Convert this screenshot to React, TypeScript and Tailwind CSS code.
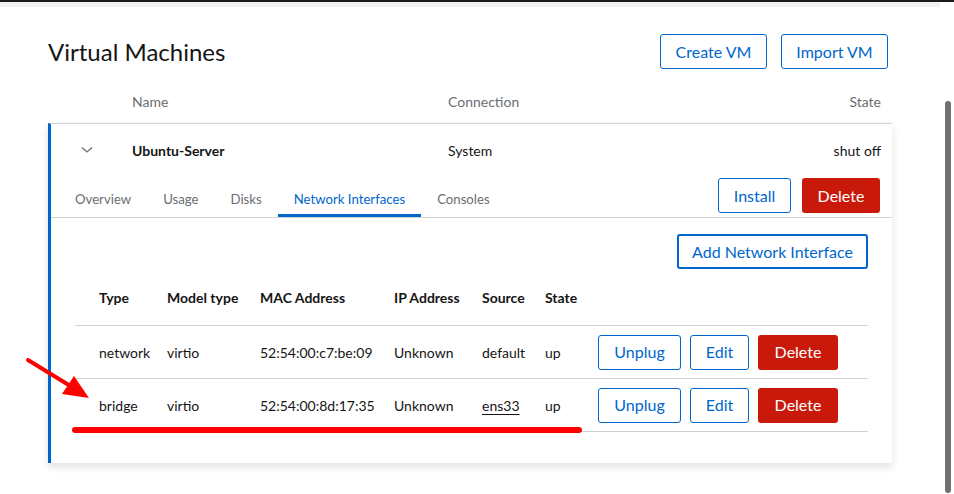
import React from "react";

const Outline = ({ children, className = "" }: { children: React.ReactNode; className?: string }) => (
  <button className={`h-[35px] rounded-[3px] border border-[#0066cc] text-[#0066cc] text-[16px] bg-white ${className}`}>
    {children}
  </button>
);
const Danger = ({ children, className = "" }: { children: React.ReactNode; className?: string }) => (
  <button className={`h-[35px] rounded-[3px] bg-[#c9190b] text-white text-[16px] ${className}`}>{children}</button>
);

const rows = [
  { type: "network", model: "virtio", mac: "52:54:00:c7:be:09", ip: "Unknown", source: "default", state: "up", link: false },
  { type: "bridge", model: "virtio", mac: "52:54:00:8d:17:35", ip: "Unknown", source: "ens33", state: "up", link: true },
];

const cols = "grid grid-cols-[92px_93px_134px_88px_63px_53px_1fr] items-center";

export default function App() {
  return (
    <div className="relative w-[954px] h-[494px] overflow-hidden bg-white font-['Lato',sans-serif] text-[#151515]">
      <div className="h-[2px] bg-[#1b1b1b]" />
      <div className="h-[5px] w-[940px] bg-[#f2f2f2]" />
      <div className="absolute left-[945px] top-[101px] w-[6px] h-[392px] rounded-[3px] bg-[#707070]" />

      <div className="pl-[48px] pr-[62px]">
        <div className="flex items-center justify-between mt-[27px] pr-[4px]">
          <h1 className="text-[24px] leading-[35px] text-[#151515]">Virtual Machines</h1>
          <div className="flex gap-[14px]">
            <Outline className="w-[107px]">Create VM</Outline>
            <Outline className="w-[107px]">Import VM</Outline>
          </div>
        </div>

        <div className="flex items-center h-[20px] mt-[22px] text-[14px] text-[#6a6e73]">
          <div className="w-[84px]" />
          <div className="w-[316px]">Name</div>
          <div className="flex-1">Connection</div>
          <div className="pr-[11px]">State</div>
        </div>

        <div className="mt-[12px] border-t border-[#d2d2d2] border-l-[3px] border-l-[#0066cc] shadow-[0_4px_8px_rgba(0,0,0,0.12)] bg-white">
          <div className="flex items-center h-[52px] text-[14px]">
            <div className="w-[81px] flex justify-start pl-[30px]">
              <svg width="12" height="8" viewBox="0 0 12 8">
                <path d="M1 1.5 L6 6 L11 1.5" fill="none" stroke="#6a6e73" strokeWidth="1.3" />
              </svg>
            </div>
            <div className="w-[316px] font-bold">Ubuntu-Server</div>
            <div className="flex-1">System</div>
            <div className="pr-[11px]">shut off</div>
          </div>

          <div className="flex items-end justify-between border-b border-[#d2d2d2] h-[42px] pl-[8px] pr-[12px]">
            <div className="flex text-[13.2px] text-[#6a6e73]">
              {["Overview", "Usage", "Disks", "Network Interfaces", "Consoles"].map((t) => (
                <div
                  key={t}
                  className={
                    t === "Network Interfaces"
                      ? "px-[16px] pb-[4px] border-b-[3px] border-[#0066cc] text-[#0066cc]"
                      : "px-[16px] pb-[7px]"
                  }
                >
                  {t}
                </div>
              ))}
            </div>
            <div className="flex gap-[11px] mb-[4px]">
              <Outline className="w-[73px]">Install</Outline>
              <Danger className="w-[78px]">Delete</Danger>
            </div>
          </div>

          <div className="px-[24px] pt-[16px] pb-[31px]">
            <div className="flex justify-end">
              <button className="h-[35px] w-[191px] rounded-[3px] border-2 border-[#0066cc] text-[#0066cc] text-[16px] bg-white">
                Add Network Interface
              </button>
            </div>
            <div className={`${cols} h-[57px] pt-[1px] border-b border-[#d2d2d2] text-[14px] font-bold`}>
              <div className="pl-[24px]">Type</div>
              <div>Model type</div>
              <div>MAC Address</div>
              <div>IP Address</div>
              <div>Source</div>
              <div>State</div>
              <div />
            </div>
            {rows.map((r) => (
              <div key={r.mac} className={`${cols} h-[53px] border-b border-[#d2d2d2] text-[14px]`}>
                <div className="pl-[24px] pt-[1px]">{r.type}</div>
                <div className="pt-[1px]">{r.model}</div>
                <div className="pt-[1px]">{r.mac}</div>
                <div className="pt-[1px]">{r.ip}</div>
                <div className="pt-[1px]">{r.link ? <span className="underline underline-offset-[3px]">{r.source}</span> : r.source}</div>
                <div className="pt-[1px]">{r.state}</div>
                <div className="flex gap-[9px]">
                  <Outline className="w-[83px]">Unplug</Outline>
                  <Outline className="w-[59px]">Edit</Outline>
                  <Danger className="w-[80px]">Delete</Danger>
                </div>
              </div>
            ))}
          </div>
        </div>
      </div>

      <svg className="absolute left-0 top-0 pointer-events-none" width="954" height="494">
        <line x1="75" y1="430" x2="579" y2="430" stroke="#ff0000" strokeWidth="6" strokeLinecap="round" />
        <line x1="28" y1="360" x2="72" y2="387" stroke="#ff0000" strokeWidth="4" strokeLinecap="round" />
        <polygon points="89,398 62,394 74,376" fill="#ff0000" />
      </svg>
    </div>
  );
}
